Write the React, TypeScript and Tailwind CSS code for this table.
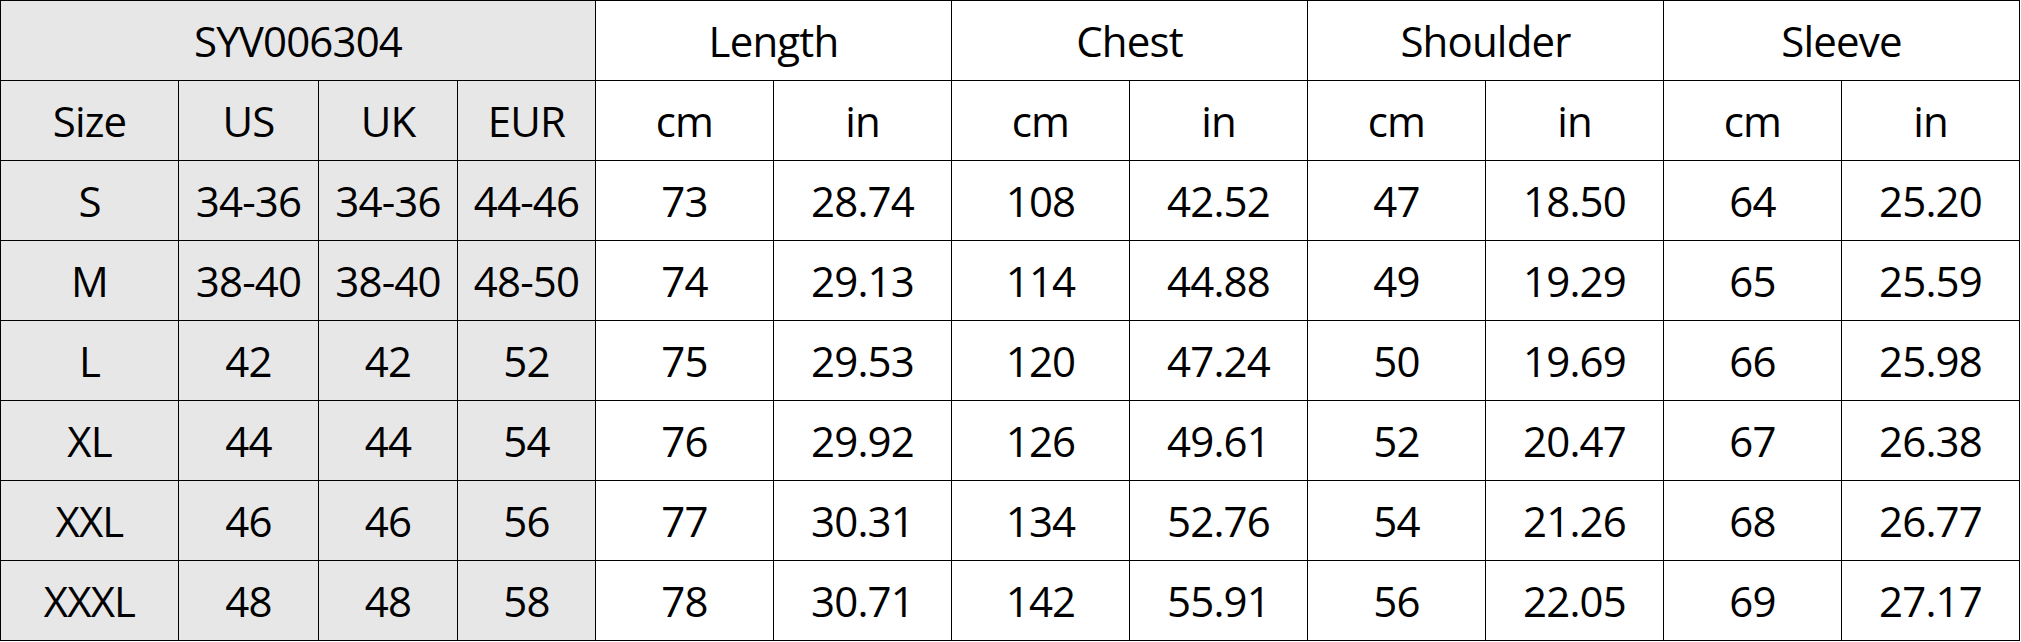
const rows = [
  ['S', '34-36', '34-36', '44-46', '73', '28.74', '108', '42.52', '47', '18.50', '64', '25.20'],
  ['M', '38-40', '38-40', '48-50', '74', '29.13', '114', '44.88', '49', '19.29', '65', '25.59'],
  ['L', '42', '42', '52', '75', '29.53', '120', '47.24', '50', '19.69', '66', '25.98'],
  ['XL', '44', '44', '54', '76', '29.92', '126', '49.61', '52', '20.47', '67', '26.38'],
  ['XXL', '46', '46', '56', '77', '30.31', '134', '52.76', '54', '21.26', '68', '26.77'],
  ['XXXL', '48', '48', '58', '78', '30.71', '142', '55.91', '56', '22.05', '69', '27.17'],
];

const cell = 'flex items-center justify-center h-[80px] border-r border-b border-black';
const gray = 'bg-[#e7e7e7]';

export default function App() {
  return (
    <div className="w-[2021px] h-[642px] bg-white text-black text-[42px] leading-none tracking-[-0.02em]" style={{ fontFamily: '"Open Sans", "Noto Sans", sans-serif' }}>
      <div className="grid w-max grid-cols-[178px_140px_139px_138px_178px_178px_178px_178px_178px_178px_178px_178px] border-l border-t border-black">
        <div className={`${cell} ${gray} col-span-4`}>SYV006304</div>
        {['Length', 'Chest', 'Shoulder', 'Sleeve'].map((h) => (
          <div key={h} className={`${cell} col-span-2`}>{h}</div>
        ))}

        {['Size', 'US', 'UK', 'EUR'].map((h) => (
          <div key={h} className={`${cell} ${gray}`}>{h}</div>
        ))}
        {[0, 1, 2, 3].flatMap((i) => [
          <div key={`cm${i}`} className={cell}>cm</div>,
          <div key={`in${i}`} className={cell}>in</div>,
        ])}

        {rows.map((r) =>
          r.map((v, j) => (
            <div key={`${r[0]}-${j}`} className={j < 4 ? `${cell} ${gray}` : cell}>{v}</div>
          ))
        )}
      </div>
    </div>
  );
}
